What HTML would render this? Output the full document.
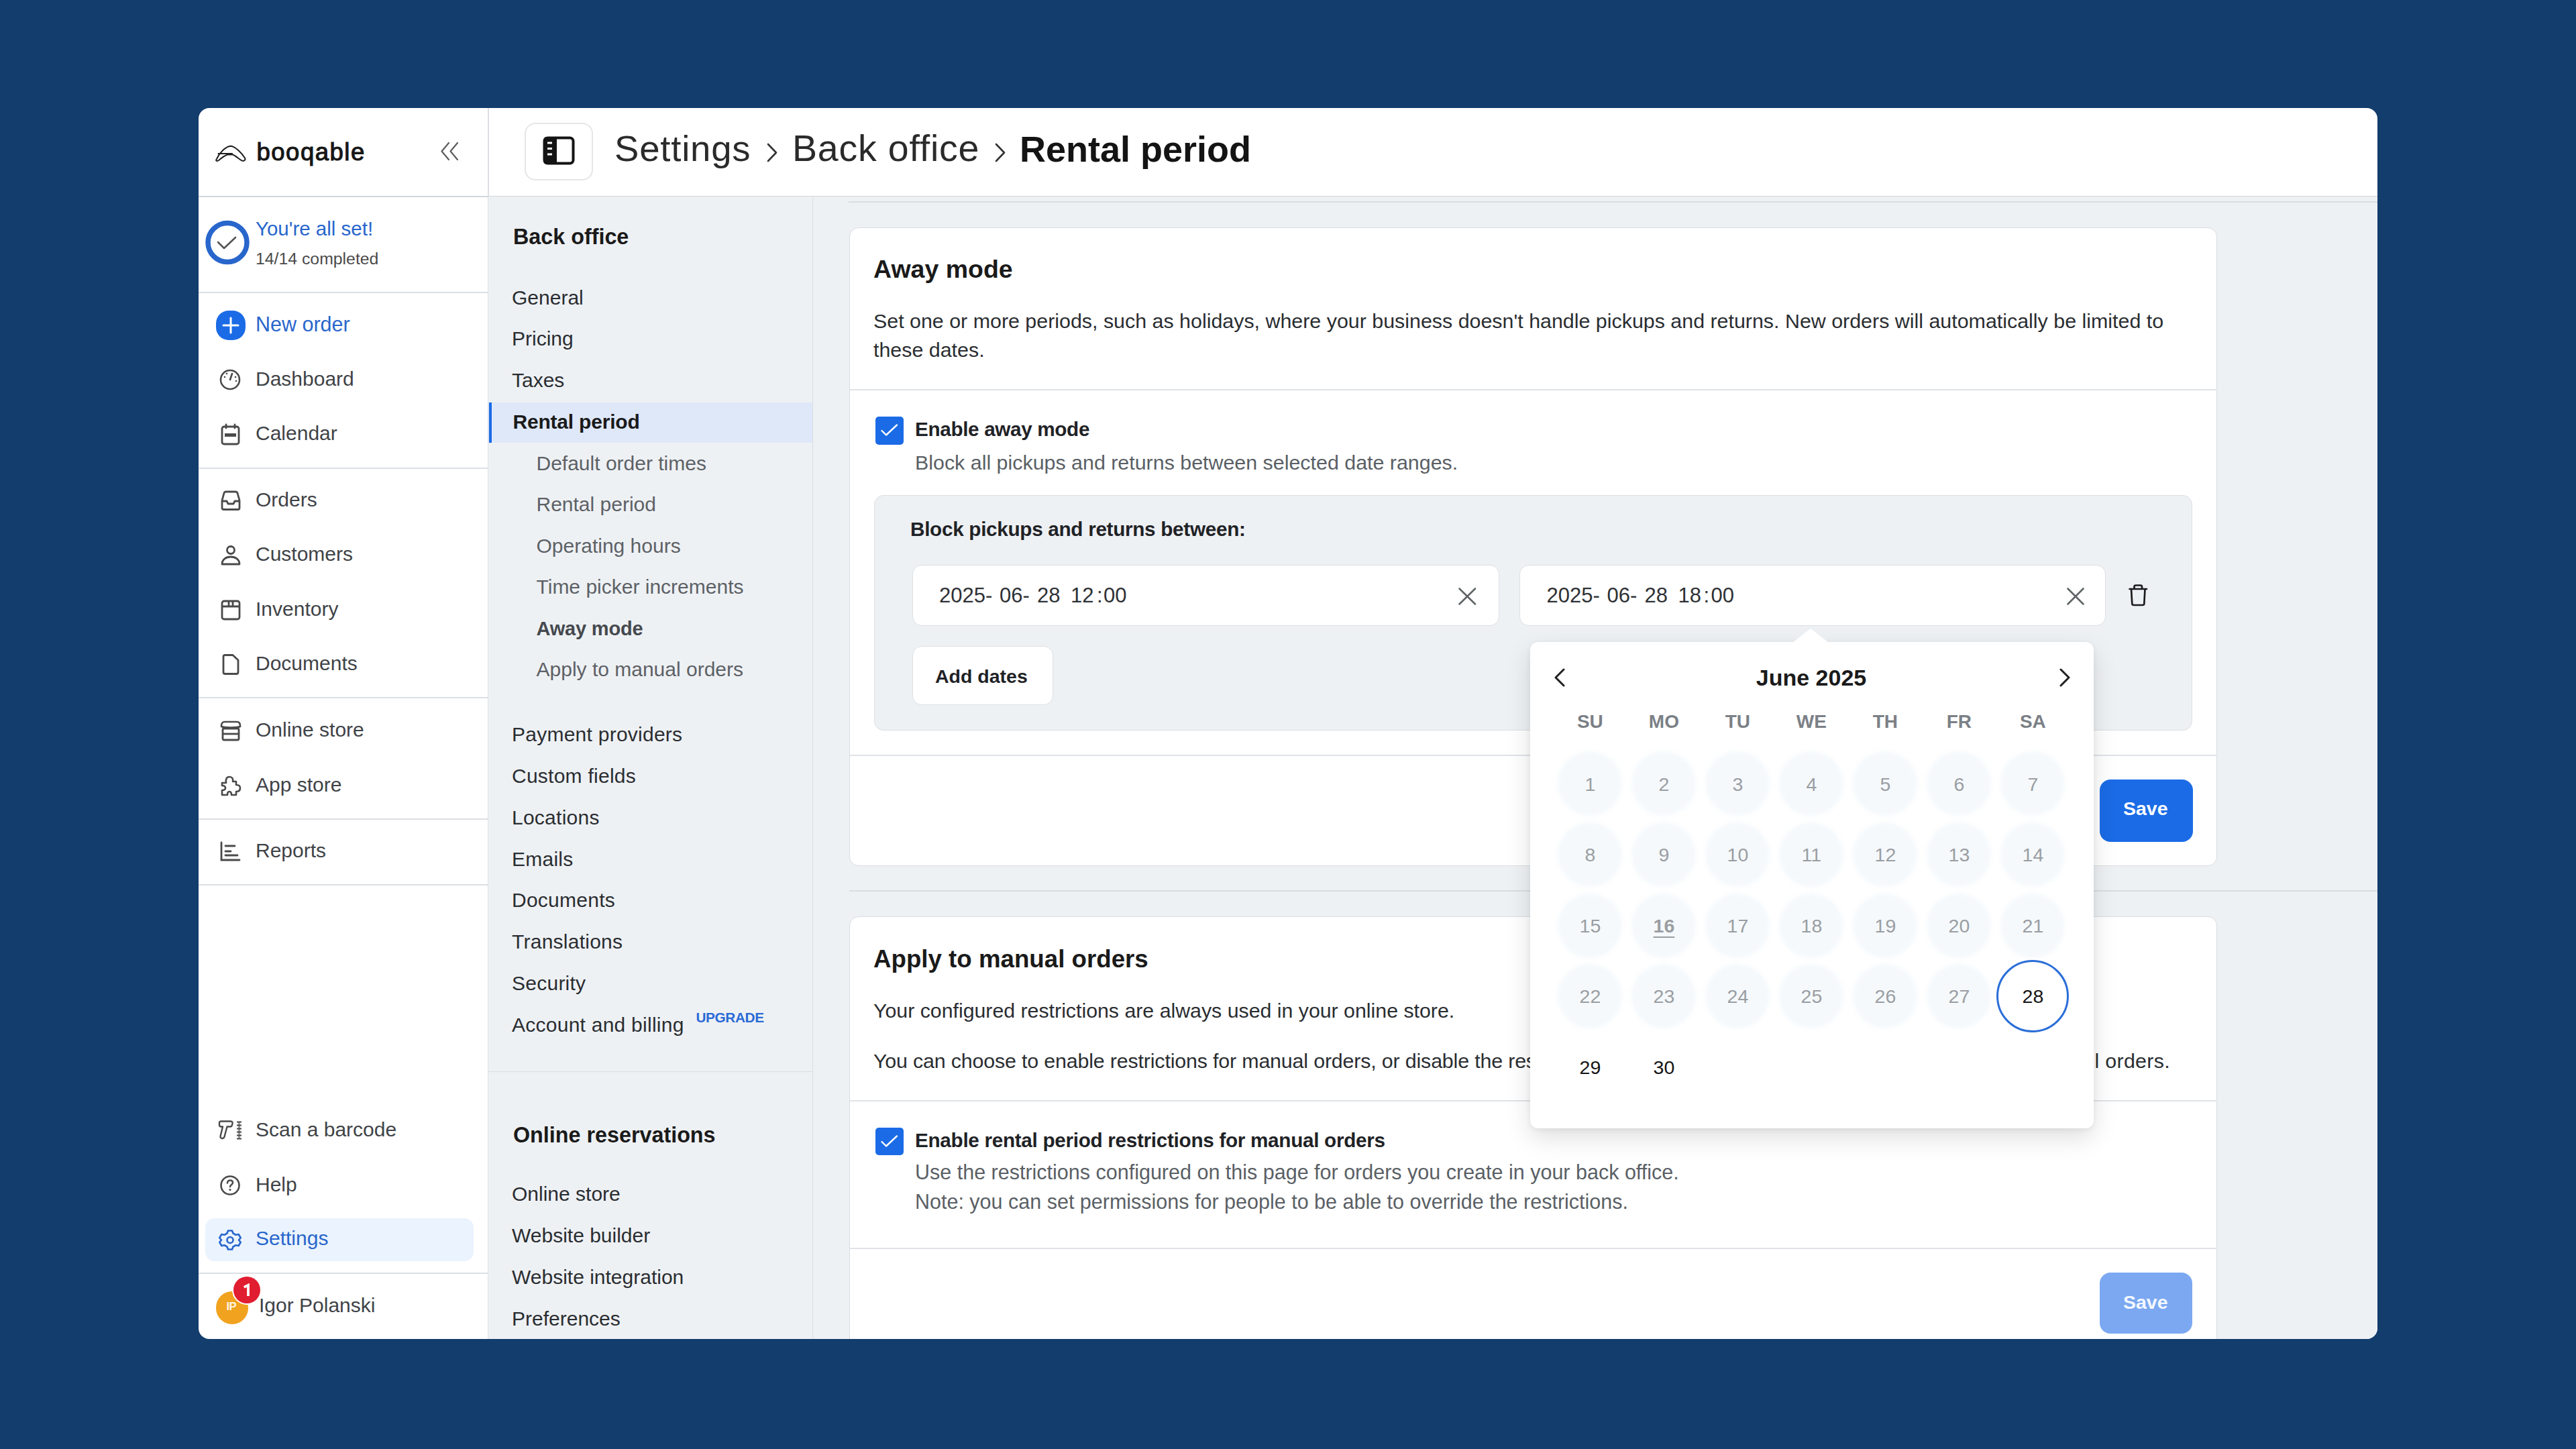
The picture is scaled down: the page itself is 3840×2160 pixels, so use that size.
<!DOCTYPE html>
<html><head><meta charset="utf-8"><title>Booqable - Rental period</title>
<style>
html,body{margin:0;padding:0;}
body{width:3840px;height:2160px;background:#133d6c;position:relative;overflow:hidden;font-family:"Liberation Sans",sans-serif;}
.t{position:absolute;line-height:1;white-space:nowrap;}
.r{position:absolute;}
#win{position:absolute;left:296px;top:161px;width:3248px;height:1835px;border-radius:16px;overflow:hidden;background:#fff;}
#in{position:absolute;left:-296px;top:-161px;width:3840px;height:2160px;}
</style></head><body>
<div id="win"><div id="in">
<svg class="r" style="left:310.0px;top:200.0px;" width="70" height="55" viewBox="0 0 70 55" fill="none"><path d="M13 37 C17 28 26 18.5 34 17.8 C41 18.5 50 28 55 35.5 C56.5 38.5 54 40.5 50.5 39.5 C46 37 41 32 37 30.5 L29 30.5 C24 32.5 19.5 36 16 39 C13 41 11 39.5 13 37 Z M15.5 29 L36 29" stroke="#1e1e1e" stroke-width="2" stroke-linejoin="round" stroke-linecap="round"/></svg>
<div class="t" style="left:382.5px;top:209.1px;font-size:36.5px;font-weight:400;color:#161616;letter-spacing:1.5px;-webkit-text-stroke:1.1px #161616">booqable</div>
<svg class="r" style="left:652.0px;top:208.0px;" width="36" height="34" viewBox="0 0 36 34" fill="none"><path d="M17 5 L6.5 17.5 L17 30 M30 5 L19.5 17.5 L30 30" stroke="#5c5c5c" stroke-width="2.2" stroke-linecap="round" stroke-linejoin="round"/></svg>
<div class="r" style="left:296.0px;top:292.0px;width:431.0px;height:2.0px;background:#d3d6da"></div>
<svg class="r" style="left:303.0px;top:325.0px;" width="72" height="72" viewBox="0 0 72 72" fill="none"><circle cx="36" cy="36.5" r="29" stroke="#2866cc" stroke-width="7.5"/><path d="M22 36 L31 45 L48 29" stroke="#555" stroke-width="2.6" stroke-linecap="round" stroke-linejoin="round"/></svg>
<div class="t" style="left:381.0px;top:326.0px;font-size:29.5px;font-weight:400;color:#2866cc;">You're all set!</div>
<div class="t" style="left:381.0px;top:374.0px;font-size:24.8px;font-weight:400;color:#4a4a4a;">14/14 completed</div>
<div class="r" style="left:296.0px;top:434.5px;width:431.0px;height:2.0px;background:#dcdfe3"></div>
<div class="r" style="left:322.0px;top:463.0px;width:44.0px;height:44.0px;background:#1b6be6;border-radius:19px"></div>
<svg class="r" style="left:322.0px;top:463.0px;" width="44" height="44" viewBox="0 0 44 44" fill="none"><path d="M22 11 V33 M11 22 H33" stroke="#fff" stroke-width="3" stroke-linecap="round"/></svg>
<div class="t" style="left:381.0px;top:468.2px;font-size:30.5px;font-weight:400;color:#2866cc;">New order</div>
<svg class="r" style="left:326.0px;top:549.0px;" width="34" height="34" viewBox="0 0 34 34" fill="none"><circle cx="17" cy="17" r="14" stroke="#4a4a4a" stroke-width="2.6"/><path d="M17 17 L20 8" stroke="#4a4a4a" stroke-width="2.6" stroke-linecap="round"/><circle cx="9" cy="13" r="1.3" fill="#4a4a4a"/><circle cx="12" cy="8" r="1.3" fill="#4a4a4a"/><circle cx="25" cy="13" r="1.3" fill="#4a4a4a"/><circle cx="26" cy="19" r="1.3" fill="#4a4a4a"/></svg>
<div class="t" style="left:381.0px;top:549.9px;font-size:30px;font-weight:400;color:#3f4347;">Dashboard</div>
<svg class="r" style="left:327.0px;top:630.0px;" width="34" height="36" viewBox="0 0 34 36" fill="none"><rect x="4" y="6" width="25" height="26" rx="3" stroke="#4a4a4a" stroke-width="2.8"/><path d="M10 3 V8 M23 3 V8" stroke="#4a4a4a" stroke-width="2.8" stroke-linecap="round"/><rect x="8" y="16" width="17" height="5" fill="#4a4a4a"/></svg>
<div class="t" style="left:381.0px;top:630.9px;font-size:30px;font-weight:400;color:#3f4347;">Calendar</div>
<div class="r" style="left:296.0px;top:696.5px;width:431.0px;height:2.0px;background:#dcdfe3"></div>
<svg class="r" style="left:326.0px;top:730.0px;" width="36" height="32" viewBox="0 0 36 32" fill="none"><path d="M5 16 L8 5 C8.5 3.5 9.5 3 11 3 H25 C26.5 3 27.5 3.5 28 5 L31 16 V27 C31 28.5 30 29.5 28.5 29.5 H7.5 C6 29.5 5 28.5 5 27 Z" stroke="#4a4a4a" stroke-width="2.8" stroke-linejoin="round"/><path d="M5 17 H12 L14 21 H22 L24 17 H31" stroke="#4a4a4a" stroke-width="2.8" stroke-linejoin="round"/></svg>
<div class="t" style="left:381.0px;top:730.4px;font-size:30px;font-weight:400;color:#3f4347;">Orders</div>
<svg class="r" style="left:327.0px;top:810.0px;" width="34" height="36" viewBox="0 0 34 36" fill="none"><circle cx="17" cy="10" r="5.5" stroke="#4a4a4a" stroke-width="2.8"/><path d="M4 31 C4 24 10 20 17 20 C24 20 30 24 30 31 Z" stroke="#4a4a4a" stroke-width="2.8" stroke-linejoin="round"/></svg>
<div class="t" style="left:381.0px;top:811.4px;font-size:30px;font-weight:400;color:#3f4347;">Customers</div>
<svg class="r" style="left:327.0px;top:892.0px;" width="34" height="34" viewBox="0 0 34 34" fill="none"><rect x="4" y="4" width="26" height="27" rx="3" stroke="#4a4a4a" stroke-width="2.8"/><path d="M4 12 H30 M14 4 V12 M20 4 V12" stroke="#4a4a4a" stroke-width="2.8"/></svg>
<div class="t" style="left:381.0px;top:893.1px;font-size:30px;font-weight:400;color:#3f4347;">Inventory</div>
<svg class="r" style="left:329.0px;top:973.0px;" width="30" height="34" viewBox="0 0 30 34" fill="none"><path d="M4 6 C4 4.5 5 3.5 6.5 3.5 H18 L26 11 V29 C26 30.5 25 31.5 23.5 31.5 H6.5 C5 31.5 4 30.5 4 29 Z" stroke="#4a4a4a" stroke-width="2.8" stroke-linejoin="round"/></svg>
<div class="t" style="left:381.0px;top:973.6px;font-size:30px;font-weight:400;color:#3f4347;">Documents</div>
<div class="r" style="left:296.0px;top:1039.0px;width:431.0px;height:2.0px;background:#dcdfe3"></div>
<svg class="r" style="left:326.0px;top:1072.0px;" width="36" height="34" viewBox="0 0 36 34" fill="none"><path d="M4 10 C4 6 6 4 9 4 H27 C30 4 32 6 32 10 V11 C28 13 8 13 4 11 Z" stroke="#4a4a4a" stroke-width="2.6" stroke-linejoin="round"/><rect x="6" y="14" width="24" height="17" rx="2" stroke="#4a4a4a" stroke-width="2.8"/><path d="M6 22 H30" stroke="#4a4a4a" stroke-width="2.8"/></svg>
<div class="t" style="left:381.0px;top:1073.3px;font-size:30px;font-weight:400;color:#3f4347;">Online store</div>
<svg class="r" style="left:326.0px;top:1154.0px;" width="34" height="34" viewBox="0 0 34 34" fill="none"><path d="M5 13 H11 C10 7 12 4 16 4 C20 4 22 7 21 11 H26 V16 C31 16 32 18 32 21 C32 24 30 26 26 26 V31 H19 C19 27 18 26 16 26 C14 26 13 27 13 31 H5 V24 C8 24 10 23 10 20.5 C10 18 8 17 5 17 Z" stroke="#4a4a4a" stroke-width="2.6" stroke-linejoin="round"/></svg>
<div class="t" style="left:381.0px;top:1154.6px;font-size:30px;font-weight:400;color:#3f4347;">App store</div>
<div class="r" style="left:296.0px;top:1219.5px;width:431.0px;height:2.0px;background:#dcdfe3"></div>
<svg class="r" style="left:326.0px;top:1252.0px;" width="34" height="34" viewBox="0 0 34 34" fill="none"><path d="M4 4 V30 H31" stroke="#4a4a4a" stroke-width="2.8" stroke-linecap="round"/><path d="M10 9 H24 M10 17 H18 M10 23 H28" stroke="#4a4a4a" stroke-width="2.8" stroke-linecap="round"/></svg>
<div class="t" style="left:381.0px;top:1253.2px;font-size:30px;font-weight:400;color:#3f4347;">Reports</div>
<div class="r" style="left:296.0px;top:1317.5px;width:431.0px;height:2.0px;background:#dcdfe3"></div>
<svg class="r" style="left:322.0px;top:1668.0px;" width="44" height="34" viewBox="0 0 44 34" fill="none"><path d="M5 5.5 C5 4 6 3.5 7.5 3.5 H22 C24 3.5 25 5 24.5 7 L23.8 9.5 C23.5 10.8 22.5 11.5 21 11.5 H16.5 L12.5 26.5 C12.1 28 10.8 29 9.3 29 C7.3 29 6.1 27.5 6.6 25.5 L10 11.5 H7.5 C6 11.5 5 10.5 5 9 Z" stroke="#4a4a4a" stroke-width="2.4" stroke-linejoin="round"/><path d="M31 4.5 H38 M31 9.5 H38 M31 14.5 H38 M31 19.5 H38 M31 24.5 H38 M31 29.5 H38" stroke="#4a4a4a" stroke-width="2.2"/><path d="M34.5 4 V30" stroke="#4a4a4a" stroke-width="3" opacity="0.55"/></svg>
<div class="t" style="left:381.0px;top:1669.1px;font-size:30px;font-weight:400;color:#3f4347;">Scan a barcode</div>
<svg class="r" style="left:326.0px;top:1750.0px;" width="34" height="34" viewBox="0 0 34 34" fill="none"><circle cx="17" cy="17" r="13.5" stroke="#4a4a4a" stroke-width="2.6"/><path d="M13 13.5 C13 11 15 9.5 17 9.5 C19.5 9.5 21 11 21 13 C21 16 17 16 17 19" stroke="#4a4a4a" stroke-width="2.6" stroke-linecap="round"/><circle cx="17" cy="23.5" r="1.6" fill="#4a4a4a"/></svg>
<div class="t" style="left:381.0px;top:1750.6px;font-size:30px;font-weight:400;color:#3f4347;">Help</div>
<div class="r" style="left:306.0px;top:1816.0px;width:400.0px;height:63.5px;background:#eaf3fe;border-radius:14px"></div>
<svg class="r" style="left:326.0px;top:1831.0px;" width="34" height="34" viewBox="0 0 34 34" fill="none"><path d="M14 3.5 H20 L21.5 7.5 L25.5 9.8 L29.7 9 L32.7 14.2 L30 17.5 L32.7 20.8 L29.7 26 L25.5 25.2 L21.5 27.5 L20 31.5 H14 L12.5 27.5 L8.5 25.2 L4.3 26 L1.3 20.8 L4 17.5 L1.3 14.2 L4.3 9 L8.5 9.8 L12.5 7.5 Z" stroke="#2866cc" stroke-width="2.6" stroke-linejoin="round"/><circle cx="17" cy="17.5" r="4.5" stroke="#2866cc" stroke-width="2.6"/></svg>
<div class="t" style="left:381.0px;top:1831.4px;font-size:30px;font-weight:400;color:#2866cc;">Settings</div>
<div class="r" style="left:296.0px;top:1896.5px;width:431.0px;height:2.0px;background:#dcdfe3"></div>
<div class="r" style="left:321.5px;top:1925.0px;width:48.6px;height:48.6px;background:#f1a21f;border-radius:50%"></div>
<div class="t" style="left:337.5px;top:1939.3px;font-size:16.5px;font-weight:700;color:#fff8e8;letter-spacing:-0.5px">IP</div>
<div class="r" style="left:347.8px;top:1902.8px;width:40.0px;height:40.0px;background:#e11d31;border-radius:50%;box-shadow:0 0 0 2px #fff"></div>
<svg class="r" style="left:355.0px;top:1908.0px;" width="26" height="30" viewBox="0 0 26 30" fill="none"><path d="M10.5 10 L15 7.8 V22" stroke="#fff" stroke-width="3.8" stroke-linecap="square" stroke-linejoin="miter"/></svg>
<div class="t" style="left:386.0px;top:1930.8px;font-size:30px;font-weight:400;color:#3f4347;">Igor Polanski</div>
<div class="r" style="left:726.5px;top:161.0px;width:2.0px;height:1835.0px;background:#dcdfe3"></div>
<div class="r" style="left:782.0px;top:182.5px;width:102.0px;height:86.5px;border:2px solid #e4e6e8;border-radius:16px;box-sizing:border-box"></div>
<svg class="r" style="left:808.0px;top:202.0px;" width="50" height="45" viewBox="0 0 50 45" fill="none"><rect x="3.5" y="3.5" width="43" height="38" rx="5" stroke="#141414" stroke-width="4"/><rect x="2" y="2" width="20" height="41" rx="5" fill="#141414"/><rect x="16" y="2" width="6" height="41" fill="#141414"/><path d="M8 11 H15 M8 19.5 H15 M8 28 H15" stroke="#fff" stroke-width="3"/></svg>
<div class="t" style="left:916.0px;top:194.5px;font-size:54.5px;font-weight:400;color:#2a2a2a;letter-spacing:0.8px">Settings</div>
<svg class="r" style="left:1140.0px;top:212.0px;" width="24" height="32" viewBox="0 0 24 32" fill="none"><path d="M5 3 L17 15.5 L5 28" stroke="#333" stroke-width="2.6" stroke-linecap="round" stroke-linejoin="round"/></svg>
<div class="t" style="left:1181.0px;top:193.6px;font-size:55.5px;font-weight:400;color:#2a2a2a;letter-spacing:0.8px">Back office</div>
<svg class="r" style="left:1480.0px;top:212.0px;" width="24" height="32" viewBox="0 0 24 32" fill="none"><path d="M5 3 L17 15.5 L5 28" stroke="#333" stroke-width="2.6" stroke-linecap="round" stroke-linejoin="round"/></svg>
<div class="t" style="left:1520.0px;top:195.3px;font-size:54px;font-weight:700;color:#141414;">Rental period</div>
<div class="r" style="left:727.0px;top:292.0px;width:2817.0px;height:2.0px;background:#d3d6da"></div>
<div class="r" style="left:728.0px;top:293.0px;width:483.0px;height:1703.0px;background:#eef1f4"></div>
<div class="r" style="left:1210.5px;top:293.0px;width:1.5px;height:1703.0px;background:#d9dde1"></div>
<div class="t" style="left:765.0px;top:336.7px;font-size:32.3px;font-weight:700;color:#1a1a1a;">Back office</div>
<div class="t" style="left:763.0px;top:429.2px;font-size:30px;font-weight:400;color:#2a2d31;">General</div>
<div class="t" style="left:763.0px;top:490.4px;font-size:30px;font-weight:400;color:#2a2d31;">Pricing</div>
<div class="t" style="left:763.0px;top:552.0px;font-size:30px;font-weight:400;color:#2a2d31;">Taxes</div>
<div class="r" style="left:728.0px;top:599.5px;width:482.5px;height:60.7px;background:#dfe8f9"></div>
<div class="r" style="left:728.5px;top:599.5px;width:4.5px;height:60.7px;background:#1b6be6"></div>
<div class="t" style="left:764.5px;top:613.6px;font-size:30px;font-weight:700;color:#1a1a1a;letter-spacing:-0.2px">Rental period</div>
<div class="t" style="left:799.5px;top:676.0px;font-size:30px;font-weight:400;color:#5d6166;">Default order times</div>
<div class="t" style="left:799.5px;top:737.3px;font-size:30px;font-weight:400;color:#5d6166;">Rental period</div>
<div class="t" style="left:799.5px;top:798.8px;font-size:30px;font-weight:400;color:#5d6166;">Operating hours</div>
<div class="t" style="left:799.5px;top:860.4px;font-size:30px;font-weight:400;color:#5d6166;">Time picker increments</div>
<div class="t" style="left:799.5px;top:922.5px;font-size:29px;font-weight:700;color:#45494e;letter-spacing:-0.2px">Away mode</div>
<div class="t" style="left:799.5px;top:982.9px;font-size:30px;font-weight:400;color:#5d6166;">Apply to manual orders</div>
<div class="t" style="left:763.0px;top:1080.1px;font-size:30px;font-weight:400;color:#2a2d31;letter-spacing:0.25px">Payment providers</div>
<div class="t" style="left:763.0px;top:1141.9px;font-size:30px;font-weight:400;color:#2a2d31;letter-spacing:0.25px">Custom fields</div>
<div class="t" style="left:763.0px;top:1203.7px;font-size:30px;font-weight:400;color:#2a2d31;letter-spacing:0.25px">Locations</div>
<div class="t" style="left:763.0px;top:1265.5px;font-size:30px;font-weight:400;color:#2a2d31;letter-spacing:0.25px">Emails</div>
<div class="t" style="left:763.0px;top:1327.3px;font-size:30px;font-weight:400;color:#2a2d31;letter-spacing:0.25px">Documents</div>
<div class="t" style="left:763.0px;top:1389.1px;font-size:30px;font-weight:400;color:#2a2d31;letter-spacing:0.25px">Translations</div>
<div class="t" style="left:763.0px;top:1450.9px;font-size:30px;font-weight:400;color:#2a2d31;letter-spacing:0.25px">Security</div>
<div class="t" style="left:763.0px;top:1512.7px;font-size:30px;font-weight:400;color:#2a2d31;letter-spacing:0.25px">Account and billing</div>
<div class="t" style="left:1037.5px;top:1507.4px;font-size:20.8px;font-weight:700;color:#2a6ad6;letter-spacing:-0.4px">UPGRADE</div>
<div class="r" style="left:728.0px;top:1596.5px;width:482.5px;height:1.5px;background:#d9dde1"></div>
<div class="t" style="left:765.0px;top:1675.7px;font-size:32.3px;font-weight:700;color:#1a1a1a;">Online reservations</div>
<div class="t" style="left:763.0px;top:1765.1px;font-size:30px;font-weight:400;color:#2a2d31;">Online store</div>
<div class="t" style="left:763.0px;top:1826.9px;font-size:30px;font-weight:400;color:#2a2d31;">Website builder</div>
<div class="t" style="left:763.0px;top:1888.7px;font-size:30px;font-weight:400;color:#2a2d31;">Website integration</div>
<div class="t" style="left:763.0px;top:1950.5px;font-size:30px;font-weight:400;color:#2a2d31;">Preferences</div>
<div class="r" style="left:1212.0px;top:293.0px;width:2332.0px;height:1703.0px;background:#eef1f4"></div>
<div class="r" style="left:1265.0px;top:300.0px;width:2279.0px;height:2.0px;background:#d9dde1"></div>
<div class="r" style="left:1266.0px;top:339.0px;width:2039.0px;height:952.0px;background:#fff;border:1.5px solid #d9dde1;border-radius:14px;box-sizing:border-box"></div>
<div class="t" style="left:1302.0px;top:383.3px;font-size:37.5px;font-weight:700;color:#1a1a1a;">Away mode</div>
<div class="t" style="left:1302.0px;top:462.5px;font-size:30.4px;font-weight:400;color:#2a2d31;">Set one or more periods, such as holidays, where your business doesn't handle pickups and returns. New orders will automatically be limited to</div>
<div class="t" style="left:1302.0px;top:505.8px;font-size:30.4px;font-weight:400;color:#2a2d31;">these dates.</div>
<div class="r" style="left:1266.0px;top:579.5px;width:2039.0px;height:2.0px;background:#dfe2e6"></div>
<div class="r" style="left:1305.0px;top:621.3px;width:42.3px;height:41.7px;background:#1b6be6;border-radius:5px"></div>
<svg class="r" style="left:1305.0px;top:621.0px;" width="42" height="42" viewBox="0 0 42 42" fill="none"><path d="M9.5 21 L16 27.5 L32 12.5" stroke="#fff" stroke-width="2.4" stroke-linecap="round" stroke-linejoin="round"/></svg>
<div class="t" style="left:1364.0px;top:624.9px;font-size:29.7px;font-weight:700;color:#1f2226;letter-spacing:-0.35px">Enable away mode</div>
<div class="t" style="left:1364.0px;top:673.5px;font-size:30.4px;font-weight:400;color:#5a5f65;">Block all pickups and returns between selected date ranges.</div>
<div class="r" style="left:1303.0px;top:738.0px;width:1964.5px;height:351.0px;background:#eef1f4;border:1.5px solid #dcdfe3;border-radius:14px;box-sizing:border-box"></div>
<div class="t" style="left:1357.0px;top:773.9px;font-size:29.7px;font-weight:700;color:#1f2226;letter-spacing:-0.3px">Block pickups and returns between:</div>
<div class="r" style="left:1360.0px;top:842.0px;width:875.0px;height:90.5px;background:#fff;border:1.5px solid #dde0e4;border-radius:14px;box-sizing:border-box"></div>
<div class="t" style="left:1400.0px;top:872.3px;font-size:31px;font-weight:400;color:#2e3135;">2025-</div>
<div class="t" style="left:1490.0px;top:872.3px;font-size:31px;font-weight:400;color:#2e3135;">06-</div>
<div class="t" style="left:1546.0px;top:872.3px;font-size:31px;font-weight:400;color:#2e3135;">28</div>
<div class="t" style="left:1596.0px;top:872.3px;font-size:31px;font-weight:400;color:#2e3135;">12</div>
<div class="t" style="left:1635.0px;top:872.3px;font-size:31px;font-weight:400;color:#2e3135;">:</div>
<div class="t" style="left:1645.0px;top:872.3px;font-size:31px;font-weight:400;color:#2e3135;">00</div>
<svg class="r" style="left:2170.0px;top:872.0px;" width="34" height="34" viewBox="0 0 34 34" fill="none"><path d="M5.5 5.5 L29 28.5 M29 5.5 L5.5 28.5" stroke="#5e6466" stroke-width="2.6" stroke-linecap="round"/></svg>
<div class="r" style="left:2265.0px;top:842.0px;width:874.0px;height:90.5px;background:#fff;border:1.5px solid #dde0e4;border-radius:14px;box-sizing:border-box"></div>
<div class="t" style="left:2305.5px;top:872.3px;font-size:31px;font-weight:400;color:#2e3135;">2025-</div>
<div class="t" style="left:2395.5px;top:872.3px;font-size:31px;font-weight:400;color:#2e3135;">06-</div>
<div class="t" style="left:2451.5px;top:872.3px;font-size:31px;font-weight:400;color:#2e3135;">28</div>
<div class="t" style="left:2501.5px;top:872.3px;font-size:31px;font-weight:400;color:#2e3135;">18</div>
<div class="t" style="left:2539.5px;top:872.3px;font-size:31px;font-weight:400;color:#2e3135;">:</div>
<div class="t" style="left:2550.5px;top:872.3px;font-size:31px;font-weight:400;color:#2e3135;">00</div>
<svg class="r" style="left:3077.0px;top:872.0px;" width="34" height="34" viewBox="0 0 34 34" fill="none"><path d="M5.5 5.5 L28.5 28.5 M28.5 5.5 L5.5 28.5" stroke="#5e6466" stroke-width="2.6" stroke-linecap="round"/></svg>
<svg class="r" style="left:3170.0px;top:869.0px;" width="34" height="36" viewBox="0 0 34 36" fill="none"><path d="M4.5 9 H30 M11.5 9 V5.5 C11.5 4 12.5 3.5 14 3.5 H20.5 C22 3.5 23 4 23 5.5 V9 M7 9 L8.3 31 C8.4 32.3 9.3 33 10.6 33 H24 C25.3 33 26.2 32.3 26.3 31 L27.5 9" stroke="#1c1c1c" stroke-width="2.7" stroke-linejoin="round" stroke-linecap="round"/></svg>
<div class="r" style="left:1360.0px;top:962.5px;width:209.5px;height:88.5px;background:#fff;border:1.5px solid #dde0e4;border-radius:14px;box-sizing:border-box"></div>
<div class="t" style="left:1394.0px;top:993.6px;font-size:28.5px;font-weight:700;color:#1f2226;">Add dates</div>
<div class="r" style="left:1266.0px;top:1124.7px;width:2039.0px;height:2.0px;background:#dfe2e6"></div>
<div class="r" style="left:3130.0px;top:1162.0px;width:139.0px;height:93.0px;background:#1b6be6;border-radius:16px"></div>
<div class="t" style="left:3165.0px;top:1191.4px;font-size:28.5px;font-weight:700;color:#fff;">Save</div>
<div class="r" style="left:1266.0px;top:1327.0px;width:2278.0px;height:2.0px;background:#d9dde1"></div>
<div class="r" style="left:1266.0px;top:1366.0px;width:2039.0px;height:700.0px;background:#fff;border:1.5px solid #d9dde1;border-radius:14px;box-sizing:border-box"></div>
<div class="t" style="left:1302.0px;top:1411.9px;font-size:36.7px;font-weight:700;color:#1a1a1a;">Apply to manual orders</div>
<div class="t" style="left:1302.0px;top:1492.1px;font-size:30.3px;font-weight:400;color:#2a2d31;">Your configured restrictions are always used in your online store.</div>
<div class="t" style="left:1302.0px;top:1566.3px;font-size:30.4px;font-weight:400;color:#2a2d31;letter-spacing:-0.17px">You can choose to enable restrictions for manual orders, or disable the restrictions to give your team more flexibility</div>
<div class="t" style="left:3122.5px;top:1566.3px;font-size:30.4px;font-weight:400;color:#2a2d31;letter-spacing:0.3px">l orders.</div>
<div class="r" style="left:1266.0px;top:1640.0px;width:2039.0px;height:2.0px;background:#dfe2e6"></div>
<div class="r" style="left:1305.0px;top:1680.8px;width:42.3px;height:41.0px;background:#1b6be6;border-radius:5px"></div>
<svg class="r" style="left:1305.0px;top:1680.5px;" width="42" height="42" viewBox="0 0 42 42" fill="none"><path d="M9.5 21 L16 27.5 L32 12.5" stroke="#fff" stroke-width="2.4" stroke-linecap="round" stroke-linejoin="round"/></svg>
<div class="t" style="left:1364.0px;top:1684.7px;font-size:29.7px;font-weight:700;color:#1f2226;letter-spacing:-0.3px">Enable rental period restrictions for manual orders</div>
<div class="t" style="left:1364.0px;top:1732.2px;font-size:30.5px;font-weight:400;color:#5a5f65;">Use the restrictions configured on this page for orders you create in your back office.</div>
<div class="t" style="left:1364.0px;top:1775.6px;font-size:30.5px;font-weight:400;color:#5a5f65;">Note: you can set permissions for people to be able to override the restrictions.</div>
<div class="r" style="left:1266.0px;top:1859.5px;width:2039.0px;height:2.0px;background:#dfe2e6"></div>
<div class="r" style="left:3130.0px;top:1897.0px;width:138.0px;height:91.0px;background:#7ba8f1;border-radius:16px"></div>
<div class="t" style="left:3165.0px;top:1926.9px;font-size:28.5px;font-weight:700;color:#f4f8ff;">Save</div>
<div class="r" style="left:2281px;top:956.5px;width:840px;height:725px;background:#fff;border-radius:12px;box-shadow:0 14px 36px rgba(0,0,0,0.13), 0 2px 8px rgba(0,0,0,0.06)"></div>
<svg class="r" style="left:2672.0px;top:934.0px;" width="54" height="26" viewBox="0 0 54 26" fill="none"><path d="M0 24 L27 3 L54 24 Z" fill="#fff"/></svg>
<svg class="r" style="left:2310.0px;top:994.0px;" width="30" height="32" viewBox="0 0 30 32" fill="none"><path d="M21 4 L9 16 L21 28" stroke="#222" stroke-width="3" stroke-linecap="round" stroke-linejoin="round"/></svg>
<svg class="r" style="left:3063.0px;top:994.0px;" width="30" height="32" viewBox="0 0 30 32" fill="none"><path d="M9 4 L21 16 L9 28" stroke="#222" stroke-width="3" stroke-linecap="round" stroke-linejoin="round"/></svg>
<div class="t" style="left:2500px;top:993.2px;width:400px;text-align:center;font-size:34px;font-weight:700;color:#1a1a1a">June 2025</div>
<div class="t" style="left:2320.4px;top:1062.3px;width:100px;text-align:center;font-size:28px;font-weight:700;color:#7b8086">SU</div>
<div class="t" style="left:2430.4px;top:1062.3px;width:100px;text-align:center;font-size:28px;font-weight:700;color:#7b8086">MO</div>
<div class="t" style="left:2540.4px;top:1062.3px;width:100px;text-align:center;font-size:28px;font-weight:700;color:#7b8086">TU</div>
<div class="t" style="left:2650.4px;top:1062.3px;width:100px;text-align:center;font-size:28px;font-weight:700;color:#7b8086">WE</div>
<div class="t" style="left:2760.4px;top:1062.3px;width:100px;text-align:center;font-size:28px;font-weight:700;color:#7b8086">TH</div>
<div class="t" style="left:2870.4px;top:1062.3px;width:100px;text-align:center;font-size:28px;font-weight:700;color:#7b8086">FR</div>
<div class="t" style="left:2980.4px;top:1062.3px;width:100px;text-align:center;font-size:28px;font-weight:700;color:#7b8086">SA</div>
<div class="r" style="left:2322.4px;top:1120.3px;width:96.0px;height:96.0px;background:#f5f9fc;border-radius:50%;filter:blur(3px)"></div>
<div class="t" style="left:2320.4px;top:1154.5px;width:100px;text-align:center;font-size:28.5px;font-weight:400;color:#9a9ea2;">1</div>
<div class="r" style="left:2432.4px;top:1120.3px;width:96.0px;height:96.0px;background:#f5f9fc;border-radius:50%;filter:blur(3px)"></div>
<div class="t" style="left:2430.4px;top:1154.5px;width:100px;text-align:center;font-size:28.5px;font-weight:400;color:#9a9ea2;">2</div>
<div class="r" style="left:2542.4px;top:1120.3px;width:96.0px;height:96.0px;background:#f5f9fc;border-radius:50%;filter:blur(3px)"></div>
<div class="t" style="left:2540.4px;top:1154.5px;width:100px;text-align:center;font-size:28.5px;font-weight:400;color:#9a9ea2;">3</div>
<div class="r" style="left:2652.4px;top:1120.3px;width:96.0px;height:96.0px;background:#f5f9fc;border-radius:50%;filter:blur(3px)"></div>
<div class="t" style="left:2650.4px;top:1154.5px;width:100px;text-align:center;font-size:28.5px;font-weight:400;color:#9a9ea2;">4</div>
<div class="r" style="left:2762.4px;top:1120.3px;width:96.0px;height:96.0px;background:#f5f9fc;border-radius:50%;filter:blur(3px)"></div>
<div class="t" style="left:2760.4px;top:1154.5px;width:100px;text-align:center;font-size:28.5px;font-weight:400;color:#9a9ea2;">5</div>
<div class="r" style="left:2872.4px;top:1120.3px;width:96.0px;height:96.0px;background:#f5f9fc;border-radius:50%;filter:blur(3px)"></div>
<div class="t" style="left:2870.4px;top:1154.5px;width:100px;text-align:center;font-size:28.5px;font-weight:400;color:#9a9ea2;">6</div>
<div class="r" style="left:2982.4px;top:1120.3px;width:96.0px;height:96.0px;background:#f5f9fc;border-radius:50%;filter:blur(3px)"></div>
<div class="t" style="left:2980.4px;top:1154.5px;width:100px;text-align:center;font-size:28.5px;font-weight:400;color:#9a9ea2;">7</div>
<div class="r" style="left:2322.4px;top:1225.9px;width:96.0px;height:96.0px;background:#f5f9fc;border-radius:50%;filter:blur(3px)"></div>
<div class="t" style="left:2320.4px;top:1260.1px;width:100px;text-align:center;font-size:28.5px;font-weight:400;color:#9a9ea2;">8</div>
<div class="r" style="left:2432.4px;top:1225.9px;width:96.0px;height:96.0px;background:#f5f9fc;border-radius:50%;filter:blur(3px)"></div>
<div class="t" style="left:2430.4px;top:1260.1px;width:100px;text-align:center;font-size:28.5px;font-weight:400;color:#9a9ea2;">9</div>
<div class="r" style="left:2542.4px;top:1225.9px;width:96.0px;height:96.0px;background:#f5f9fc;border-radius:50%;filter:blur(3px)"></div>
<div class="t" style="left:2540.4px;top:1260.1px;width:100px;text-align:center;font-size:28.5px;font-weight:400;color:#9a9ea2;">10</div>
<div class="r" style="left:2652.4px;top:1225.9px;width:96.0px;height:96.0px;background:#f5f9fc;border-radius:50%;filter:blur(3px)"></div>
<div class="t" style="left:2650.4px;top:1260.1px;width:100px;text-align:center;font-size:28.5px;font-weight:400;color:#9a9ea2;">11</div>
<div class="r" style="left:2762.4px;top:1225.9px;width:96.0px;height:96.0px;background:#f5f9fc;border-radius:50%;filter:blur(3px)"></div>
<div class="t" style="left:2760.4px;top:1260.1px;width:100px;text-align:center;font-size:28.5px;font-weight:400;color:#9a9ea2;">12</div>
<div class="r" style="left:2872.4px;top:1225.9px;width:96.0px;height:96.0px;background:#f5f9fc;border-radius:50%;filter:blur(3px)"></div>
<div class="t" style="left:2870.4px;top:1260.1px;width:100px;text-align:center;font-size:28.5px;font-weight:400;color:#9a9ea2;">13</div>
<div class="r" style="left:2982.4px;top:1225.9px;width:96.0px;height:96.0px;background:#f5f9fc;border-radius:50%;filter:blur(3px)"></div>
<div class="t" style="left:2980.4px;top:1260.1px;width:100px;text-align:center;font-size:28.5px;font-weight:400;color:#9a9ea2;">14</div>
<div class="r" style="left:2322.4px;top:1331.5px;width:96.0px;height:96.0px;background:#f5f9fc;border-radius:50%;filter:blur(3px)"></div>
<div class="t" style="left:2320.4px;top:1365.7px;width:100px;text-align:center;font-size:28.5px;font-weight:400;color:#9a9ea2;">15</div>
<div class="r" style="left:2432.4px;top:1331.5px;width:96.0px;height:96.0px;background:#f5f9fc;border-radius:50%;filter:blur(3px)"></div>
<div class="t" style="left:2430.4px;top:1365.7px;width:100px;text-align:center;font-size:28.5px;font-weight:700;color:#9a9ea2;text-decoration:underline;text-underline-offset:6px;text-decoration-thickness:2px">16</div>
<div class="r" style="left:2542.4px;top:1331.5px;width:96.0px;height:96.0px;background:#f5f9fc;border-radius:50%;filter:blur(3px)"></div>
<div class="t" style="left:2540.4px;top:1365.7px;width:100px;text-align:center;font-size:28.5px;font-weight:400;color:#9a9ea2;">17</div>
<div class="r" style="left:2652.4px;top:1331.5px;width:96.0px;height:96.0px;background:#f5f9fc;border-radius:50%;filter:blur(3px)"></div>
<div class="t" style="left:2650.4px;top:1365.7px;width:100px;text-align:center;font-size:28.5px;font-weight:400;color:#9a9ea2;">18</div>
<div class="r" style="left:2762.4px;top:1331.5px;width:96.0px;height:96.0px;background:#f5f9fc;border-radius:50%;filter:blur(3px)"></div>
<div class="t" style="left:2760.4px;top:1365.7px;width:100px;text-align:center;font-size:28.5px;font-weight:400;color:#9a9ea2;">19</div>
<div class="r" style="left:2872.4px;top:1331.5px;width:96.0px;height:96.0px;background:#f5f9fc;border-radius:50%;filter:blur(3px)"></div>
<div class="t" style="left:2870.4px;top:1365.7px;width:100px;text-align:center;font-size:28.5px;font-weight:400;color:#9a9ea2;">20</div>
<div class="r" style="left:2982.4px;top:1331.5px;width:96.0px;height:96.0px;background:#f5f9fc;border-radius:50%;filter:blur(3px)"></div>
<div class="t" style="left:2980.4px;top:1365.7px;width:100px;text-align:center;font-size:28.5px;font-weight:400;color:#9a9ea2;">21</div>
<div class="r" style="left:2322.4px;top:1437.1px;width:96.0px;height:96.0px;background:#f5f9fc;border-radius:50%;filter:blur(3px)"></div>
<div class="t" style="left:2320.4px;top:1471.3px;width:100px;text-align:center;font-size:28.5px;font-weight:400;color:#9a9ea2;">22</div>
<div class="r" style="left:2432.4px;top:1437.1px;width:96.0px;height:96.0px;background:#f5f9fc;border-radius:50%;filter:blur(3px)"></div>
<div class="t" style="left:2430.4px;top:1471.3px;width:100px;text-align:center;font-size:28.5px;font-weight:400;color:#9a9ea2;">23</div>
<div class="r" style="left:2542.4px;top:1437.1px;width:96.0px;height:96.0px;background:#f5f9fc;border-radius:50%;filter:blur(3px)"></div>
<div class="t" style="left:2540.4px;top:1471.3px;width:100px;text-align:center;font-size:28.5px;font-weight:400;color:#9a9ea2;">24</div>
<div class="r" style="left:2652.4px;top:1437.1px;width:96.0px;height:96.0px;background:#f5f9fc;border-radius:50%;filter:blur(3px)"></div>
<div class="t" style="left:2650.4px;top:1471.3px;width:100px;text-align:center;font-size:28.5px;font-weight:400;color:#9a9ea2;">25</div>
<div class="r" style="left:2762.4px;top:1437.1px;width:96.0px;height:96.0px;background:#f5f9fc;border-radius:50%;filter:blur(3px)"></div>
<div class="t" style="left:2760.4px;top:1471.3px;width:100px;text-align:center;font-size:28.5px;font-weight:400;color:#9a9ea2;">26</div>
<div class="r" style="left:2872.4px;top:1437.1px;width:96.0px;height:96.0px;background:#f5f9fc;border-radius:50%;filter:blur(3px)"></div>
<div class="t" style="left:2870.4px;top:1471.3px;width:100px;text-align:center;font-size:28.5px;font-weight:400;color:#9a9ea2;">27</div>
<div class="r" style="left:2976.4px;top:1431.1px;width:108.0px;height:108.0px;border:3px solid #2a6ed8;border-radius:50%;box-sizing:border-box;background:#fff"></div>
<div class="t" style="left:2980.4px;top:1471.3px;width:100px;text-align:center;font-size:28.5px;font-weight:400;color:#141414;">28</div>
<div class="t" style="left:2320.4px;top:1576.9px;width:100px;text-align:center;font-size:28.5px;font-weight:400;color:#141414;">29</div>
<div class="t" style="left:2430.4px;top:1576.9px;width:100px;text-align:center;font-size:28.5px;font-weight:400;color:#141414;">30</div>
</div></div>
</body></html>
